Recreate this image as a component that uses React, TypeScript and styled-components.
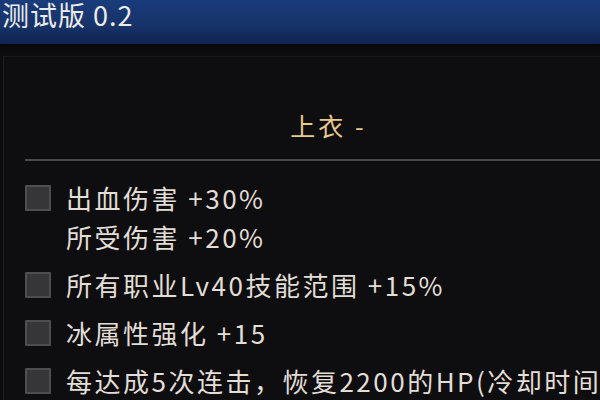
import styled, { createGlobalStyle } from 'styled-components';

const GlobalStyle = createGlobalStyle`
  html, body {
    margin: 0;
    padding: 0;
    background: #0b0b0d;
  }
  body {
    font-family: 'Noto Sans CJK SC', 'Noto Sans', sans-serif;
  }
`;

const Screen = styled.div`
  width: 600px;
  height: 400px;
  overflow: hidden;
  background: #0c0c0e;
  display: flex;
  flex-direction: column;
`;

const TitleBar = styled.header`
  height: 44px;
  flex-shrink: 0;
  background: linear-gradient(180deg, #1a3c7c 0%, #163268 60%, #10244f 100%);
  box-shadow: 0 2px 4px rgba(0, 0, 0, 0.6);
  padding-left: 2px;
`;

const TitleText = styled.h1`
  margin: 0;
  font-size: 27px;
  font-weight: 400;
  line-height: 30px;
  color: #ecebe6;
  letter-spacing: 1px;
`;

const Panel = styled.section`
  margin: 12px 0 0 3px;
  width: 607px;
  flex: 1;
  background: #0e0d0f;
  border-left: 1px solid #1f1e22;
  border-top: 1px solid #1a191c;
  padding: 0 0 0 21px;
`;

const SectionTitle = styled.h2`
  margin: 0;
  padding: 53px 0 0;
  text-align: center;
  font-size: 25px;
  font-weight: 400;
  line-height: 30px;
  letter-spacing: 3px;
  color: #e9c98e;
`;

const Divider = styled.hr`
  margin: 19px 0 0;
  width: 640px;
  border: none;
  height: 2px;
  background: #48484a;
`;

const OptionList = styled.ul`
  list-style: none;
  margin: 0;
  padding: 17px 0 0;
  display: flex;
  flex-direction: column;
  gap: 9px;
`;

const Option = styled.li`
  display: flex;
  align-items: flex-start;
  gap: 15px;
`;

const Check = styled.span`
  flex-shrink: 0;
  width: 22px;
  height: 22px;
  margin-top: 7px;
  background: #363638;
  border: 2px solid #4e4e50;
  border-radius: 1px;
`;

const Lines = styled.div`
  display: flex;
  flex-direction: column;
  font-size: 26px;
  line-height: 39px;
  color: #e2ded6;
  white-space: nowrap;
  letter-spacing: 2.5px;
`;

const options: string[][] = [
  ['出血伤害 +30%', '所受伤害 +20%'],
  ['所有职业Lv40技能范围 +15%'],
  ['冰属性强化 +15'],
  ['每达成5次连击，恢复2200的HP(冷却时间 10秒)'],
];

export default function App() {
  return (
    <Screen>
      <GlobalStyle />
      <TitleBar>
        <TitleText>测试版 0.2</TitleText>
      </TitleBar>
      <Panel>
        <SectionTitle>上衣 -</SectionTitle>
        <Divider />
        <OptionList>
          {options.map((lines) => (
            <Option key={lines[0]}>
              <Check />
              <Lines>
                {lines.map((l) => (
                  <span key={l}>{l}</span>
                ))}
              </Lines>
            </Option>
          ))}
        </OptionList>
      </Panel>
    </Screen>
  );
}
